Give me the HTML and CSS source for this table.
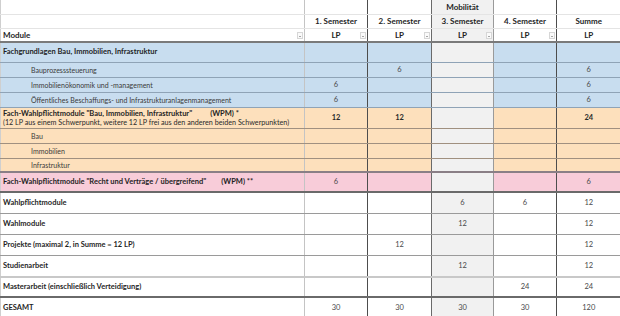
FILE: index.html
```html
<!DOCTYPE html>
<html lang="de">
<head>
<meta charset="utf-8">
<title>Module</title>
<link rel="stylesheet" href="styles.css">
</head>
<body>
<table class="t">
  <colgroup>
    <col class="w-mod"><col class="w-s1"><col class="w-s2"><col class="w-s3"><col class="w-s4"><col class="w-sum">
  </colgroup>
  <tr class="h h1">
    <td></td><td></td><td></td><td class="c3 hb">Mobilität</td><td></td><td></td>
  </tr>
  <tr class="h h2">
    <td></td><td class="hb">1. Semester</td><td class="hb">2. Semester</td><td class="c3 hb">3. Semester</td><td class="hb">4. Semester</td><td class="hb">Summe</td>
  </tr>
  <tr class="h h3">
    <td class="lbl hb fc">Module<span class="dd"></span></td>
    <td class="hb fc">LP<span class="dd"></span></td>
    <td class="hb fc">LP<span class="dd"></span></td>
    <td class="c3 hb fc">LP<span class="dd"></span></td>
    <td class="hb fc">LP<span class="dd"></span></td>
    <td class="hb">LP</td>
  </tr>
  <tr class="blue r-main">
    <td class="lbl main">Fachgrundlagen Bau, Immobilien, Infrastruktur</td><td></td><td></td><td class="c3"></td><td></td><td></td>
  </tr>
  <tr class="blue r-sub">
    <td class="lbl sub">Bauprozesssteuerung</td><td></td><td class="n">6</td><td class="c3"></td><td></td><td class="n">6</td>
  </tr>
  <tr class="blue r-sub">
    <td class="lbl sub">Immobilienökonomik und -management</td><td class="n">6</td><td></td><td class="c3"></td><td></td><td class="n">6</td>
  </tr>
  <tr class="blue r-sub r-last">
    <td class="lbl sub">Öffentliches Beschaffungs- und Infrastrukturanlagenmanagement</td><td class="n">6</td><td></td><td class="c3"></td><td></td><td class="n">6</td>
  </tr>
  <tr class="orange r-two">
    <td class="lbl"><span class="main">Fach-Wahlpflichtmodule "Bau, Immobilien, Infrastruktur"<span class="gap-l">(WPM) *</span></span><br><span class="note">(12 LP aus einem Schwerpunkt, weitere 12 LP frei aus den anderen beiden Schwerpunkten)</span></td>
    <td class="n b">12</td><td class="n b">12</td><td class="c3"></td><td></td><td class="n b">24</td>
  </tr>
  <tr class="orange r-sub">
    <td class="lbl sub">Bau</td><td></td><td></td><td class="c3"></td><td></td><td></td>
  </tr>
  <tr class="orange r-sub">
    <td class="lbl sub">Immobilien</td><td></td><td></td><td class="c3"></td><td></td><td></td>
  </tr>
  <tr class="orange r-end">
    <td class="lbl sub">Infrastruktur</td><td></td><td></td><td class="c3"></td><td></td><td></td>
  </tr>
  <tr class="pink r-pink">
    <td class="lbl main">Fach-Wahlpflichtmodule "Recht und Verträge / übergreifend"<span class="gap-s">(WPM) **</span></td><td class="n">6</td><td></td><td class="c3"></td><td></td><td class="n">6</td>
  </tr>
  <tr class="white r-w">
    <td class="lbl main">Wahlpflichtmodule</td><td></td><td></td><td class="c3 n">6</td><td class="n">6</td><td class="n">12</td>
  </tr>
  <tr class="white r-w">
    <td class="lbl main">Wahlmodule</td><td></td><td></td><td class="c3 n">12</td><td></td><td class="n">12</td>
  </tr>
  <tr class="white r-w">
    <td class="lbl main">Projekte (maximal 2, in Summe = 12 LP)</td><td></td><td class="n">12</td><td class="c3"></td><td></td><td class="n">12</td>
  </tr>
  <tr class="white r-stud">
    <td class="lbl main">Studienarbeit</td><td></td><td></td><td class="c3 n">12</td><td></td><td class="n">12</td>
  </tr>
  <tr class="white r-master">
    <td class="lbl main">Masterarbeit (einschließlich Verteidigung)</td><td></td><td></td><td class="c3"></td><td class="n">24</td><td class="n">24</td>
  </tr>
  <tr class="white r-total">
    <td class="lbl main">GESAMT</td><td class="n">30</td><td class="n">30</td><td class="c3 n">30</td><td class="n">30</td><td class="n">120</td>
  </tr>
</table>
</body>
</html>
```

FILE: styles.css
```css
html, body {
  margin: 0;
  padding: 0;
  background: #ffffff;
}

body {
  font-family: Lato, "Liberation Sans", sans-serif;
  font-size: 7px;
  color: #2a2a2a;
  overflow: hidden;
}

.t {
  border-collapse: collapse;
  table-layout: fixed;
  width: 620px;
}

.w-mod { width: 304px; }
.w-s1 { width: 63px; }
.w-s2 { width: 64px; }
.w-s3 { width: 62px; }
.w-s4 { width: 63px; }
.w-sum { width: 64px; }

td {
  padding: 0;
  border-left: 1px solid #4d4d4d;
  border-bottom: 1px solid #9a9a9a;
  text-align: center;
  vertical-align: middle;
  white-space: nowrap;
  line-height: 8px;
}

td:first-child {
  border-left: 1px solid #cfcfcf;
}

td:nth-child(2) {
  border-left-color: #c4c4c4;
}

td:nth-child(4) {
  border-left-color: #6a6a6a;
}

td:nth-child(5) {
  border-left-color: #9a9a9a;
}

/* header */
.h td {
  border-bottom: 1px solid #e4e4e4;
}
.h1, .h2, .h3 { height: 14px; }
.h3 td { border-bottom: 2px solid #7a7a7a; }

.hb {
  font-size: 8px;
  font-weight: 700;
  color: #1e1e1e;
}

.fc {
  position: relative;
}

.dd {
  position: absolute;
  right: 1px;
  top: 3px;
  width: 6px;
  height: 7px;
  background: #fafafa;
  border: 1px solid #d6d6d6;
  box-sizing: border-box;
}
.dd::after {
  content: "";
  position: absolute;
  left: 1px;
  top: 3px;
  border-left: 1.5px solid transparent;
  border-right: 1.5px solid transparent;
  border-top: 1.5px solid #555;
}

/* labels */
.lbl {
  text-align: left;
  padding-left: 2px;
}
.lbl.sub {
  padding-left: 30px;
  color: #3a3a3a;
}
.main {
  font-size: 7.5px;
  font-weight: 700;
  color: #1f1f1f;
}
.note {
  font-size: 7.2px;
  font-weight: 400;
  color: #2a2a2a;
}
.gap-l { margin-left: 18px; }
.gap-s { margin-left: 15px; }

.n {
  font-size: 7.5px;
  color: #4a4a4a;
}
.n.b {
  font-weight: 700;
  color: #2a2a2a;
}

/* row groups */
.blue td { background: #c8ddef; border-bottom-color: #8fa3b6; }
.orange td { background: #fde0bc; border-bottom-color: #a09080; }
.pink td { background: #f8ccd9; }
.white td { background: #ffffff; }

.t td.c3 { background: #f1f1f1; }

.r-main { height: 20px; }
.r-sub { height: 15px; }
.r-two { height: 21px; }
.r-w { height: 21px; }
.r-end { height: 14px; }
.r-pink { height: 20px; }
.r-stud { height: 22px; }
.r-master { height: 20px; }
.r-total { height: 20px; }

.r-end td { border-bottom: 2px solid #8a7f86; }
.r-pink td { border-bottom: 2px solid #6a6a6a; }
.r-stud td { border-bottom: 2px solid #c8c8c8; }
.r-master td { border-bottom: 2px solid #6a6a6a; }
.r-total td { border-bottom: none; }
```
